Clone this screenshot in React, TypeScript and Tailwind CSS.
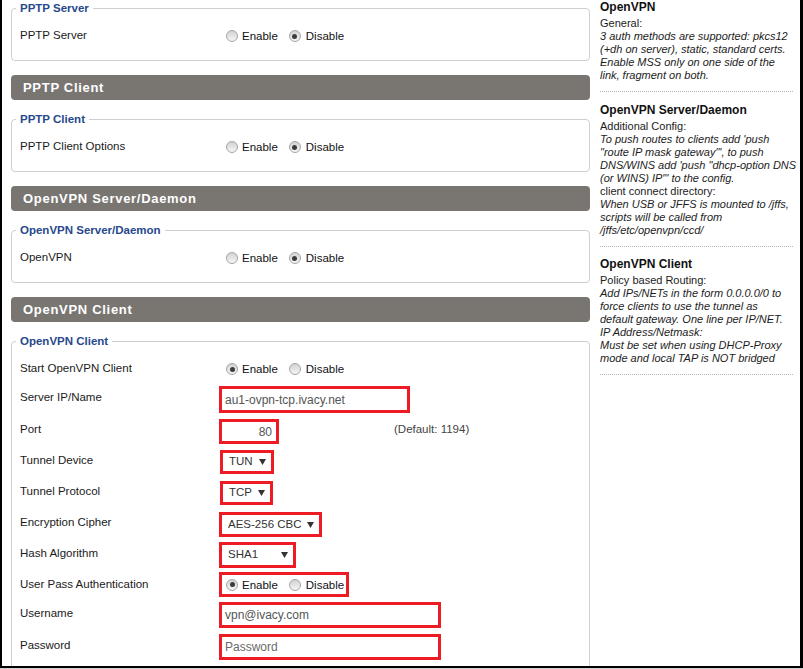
import React from 'react';

// small radio look-alike (Windows style)
function Radio({ checked }: { checked?: boolean }) {
  return (
    <span className="inline-flex h-[12px] w-[12px] items-center justify-center rounded-full border border-[#a5a5a5] bg-linear-to-b from-[#d2d2d2] to-[#f6f6f6]">
      {checked && <span className="h-[5px] w-[5px] rounded-full bg-[#3c3c3c]" />}
    </span>
  );
}

function EnableDisable({ enabled }: { enabled: boolean }) {
  return (
    <div className="flex items-center text-[11.5px] text-[#111]">
      <Radio checked={enabled} />
      <span className="ml-[4px] pt-[2px]">Enable</span>
      <span className="ml-[11px] flex items-center">
        <Radio checked={!enabled} />
      </span>
      <span className="ml-[5px] pt-[2px]">Disable</span>
    </div>
  );
}

function SectionBar({ title }: { title: string }) {
  return (
    <div className="mt-[14px] flex h-[25px] items-center rounded-[4px] bg-[#797672] pl-[12px] text-[13px] font-bold tracking-[0.7px] text-white">
      {title}
    </div>
  );
}

function Fieldset({ legend, className, children }: { legend: string; className?: string; children: React.ReactNode }) {
  return (
    <fieldset className={`rounded-[4px] border border-[#cfcfcf] pl-[4px] ${className ?? ''}`}>
      <legend className="px-[4px] text-[11.5px] font-bold leading-[14px] text-[#27498c]">{legend}</legend>
      <div className="pl-[4px]">{children}</div>
    </fieldset>
  );
}

function Label({ children, raised }: { children: React.ReactNode; raised?: boolean }) {
  return (
    <div className={`w-[199px] shrink-0 text-[11.5px] text-[#1a1a1a] ${raised ? 'pb-[3px]' : ''}`}>{children}</div>
  );
}

function SelectBox({ value, width, offset }: { value: string; width: string; offset?: string }) {
  return (
    <div className={`box-border flex h-full items-center justify-between border-[3px] border-[#ed1c24] pl-[6px] pr-[5px] text-[11.5px] text-[#333] ${width} ${offset ?? ''}`}>
      <span>{value}</span>
      <svg width="7" height="6" viewBox="0 0 7 6" className="shrink-0">
        <path d="M0 0 L7 0 L3.5 6 Z" fill="#333" />
      </svg>
    </div>
  );
}

function TextBox({ value, placeholder, width, right }: { value?: string; placeholder?: string; width: string; right?: boolean }) {
  return (
    <div
      className={`box-border flex h-full items-center border-[3px] border-[#ed1c24] text-[12px] ${
        right ? 'justify-end pr-[4px]' : 'pl-[3px]'
      } ${value ? 'text-[#555]' : 'text-[#6a6a6a]'} ${width}`}
    >
      {value ?? placeholder}
    </div>
  );
}

const help = [
  {
    title: 'OpenVPN',
    mt: 'mt-0',
    lines: [
      { t: 'General:', i: false },
      { t: '3 auth methods are supported: pkcs12', i: true },
      { t: '(+dh on server), static, standard certs.', i: true },
      { t: 'Enable MSS only on one side of the', i: true },
      { t: 'link, fragment on both.', i: true },
    ],
  },
  {
    title: 'OpenVPN Server/Daemon',
    mt: 'mt-[11px]',
    lines: [
      { t: 'Additional Config:', i: false },
      { t: "To push routes to clients add 'push", i: true },
      { t: '"route IP mask gateway"\', to push', i: true },
      { t: 'DNS/WINS add \'push "dhcp-option DNS', i: true },
      { t: '(or WINS) IP"\' to the config.', i: true },
      { t: 'client connect directory:', i: false },
      { t: 'When USB or JFFS is mounted to /jffs,', i: true },
      { t: 'scripts will be called from', i: true },
      { t: '/jffs/etc/openvpn/ccd/', i: true },
    ],
  },
  {
    title: 'OpenVPN Client',
    mt: 'mt-[10px]',
    lines: [
      { t: 'Policy based Routing:', i: false },
      { t: 'Add IPs/NETs in the form 0.0.0.0/0 to', i: true },
      { t: 'force clients to use the tunnel as', i: true },
      { t: 'default gateway. One line per IP/NET.', i: true },
      { t: 'IP Address/Netmask:', i: true },
      { t: 'Must be set when using DHCP-Proxy', i: true },
      { t: 'mode and local TAP is NOT bridged', i: true },
    ],
  },
];

export default function App() {
  return (
    <div className="h-[669px] w-[803px] overflow-hidden bg-white font-['Liberation_Sans',Arial,sans-serif]">
      <div className="flex h-[668px] border-b-2 border-l-2 border-r-[3px] border-black">
        {/* main settings column */}
        <div className="w-[588px] shrink-0 overflow-hidden pl-[9px] pt-[1px]">
          <Fieldset legend="PPTP Server" className="pb-[10px]">
            <div className="mt-[7px] flex h-[28px] items-center">
              <Label>PPTP Server</Label>
              <div className="pl-[7px]">
                <EnableDisable enabled={false} />
              </div>
            </div>
          </Fieldset>

          <SectionBar title="PPTP Client" />
          <Fieldset legend="PPTP Client" className="mt-[12px] pb-[10px]">
            <div className="mt-[7px] flex h-[28px] items-center">
              <Label>PPTP Client Options</Label>
              <div className="pl-[7px]">
                <EnableDisable enabled={false} />
              </div>
            </div>
          </Fieldset>

          <SectionBar title="OpenVPN Server/Daemon" />
          <Fieldset legend="OpenVPN Server/Daemon" className="mt-[12px] pb-[10px]">
            <div className="mt-[7px] flex h-[28px] items-center">
              <Label>OpenVPN</Label>
              <div className="pl-[7px]">
                <EnableDisable enabled={false} />
              </div>
            </div>
          </Fieldset>

          <SectionBar title="OpenVPN Client" />
          <Fieldset legend="OpenVPN Client" className="mt-[12px] pb-[20px]">
            <div className="mt-[6px] flex h-[30px] items-center">
              <Label>Start OpenVPN Client</Label>
              <div className="pl-[7px]">
                <EnableDisable enabled />
              </div>
            </div>

            <div className="mt-[2px] flex h-[27px] items-center">
              <Label raised>Server IP/Name</Label>
              <TextBox value="au1-ovpn-tcp.ivacy.net" width="w-[191px]" />
            </div>

            <div className="mt-[6px] flex h-[25px] items-center">
              <Label raised>Port</Label>
              <TextBox value="80" width="w-[60px]" right />
              <span className="ml-[115px] pb-[3px] text-[11.5px] text-[#444]">(Default: 1194)</span>
            </div>

            <div className="mt-[6px] flex h-[24px] items-center">
              <Label raised>Tunnel Device</Label>
              <SelectBox value="TUN" width="w-[54px]" offset="ml-[1px]" />
            </div>

            <div className="mt-[7px] flex h-[24px] items-center">
              <Label raised>Tunnel Protocol</Label>
              <SelectBox value="TCP" width="w-[53px]" offset="ml-[1px]" />
            </div>

            <div className="mt-[7px] flex h-[25px] items-center">
              <Label raised>Encryption Cipher</Label>
              <SelectBox value="AES-256 CBC" width="w-[103px]" />
            </div>

            <div className="mt-[5px] flex h-[26px] items-center">
              <Label raised>Hash Algorithm</Label>
              <SelectBox value="SHA1" width="w-[77px]" />
            </div>

            <div className="mt-[4px] flex h-[25px] items-center">
              <Label>User Pass Authentication</Label>
              <div className="flex h-full w-[130px] items-center border-[3px] border-[#ed1c24] pl-[4px]">
                <EnableDisable enabled />
              </div>
            </div>

            <div className="mt-[5px] flex h-[26px] items-center">
              <Label raised>Username</Label>
              <TextBox value="vpn@ivacy.com" width="w-[222px]" />
            </div>

            <div className="mt-[6px] flex h-[26px] items-center">
              <Label raised>Password</Label>
              <TextBox placeholder="Password" width="w-[222px]" />
            </div>
          </Fieldset>
        </div>

        {/* help sidebar */}
        <div className="flex-1 pl-[10px] text-[11px] text-[#1c1c1c]">
          {help.map((h) => (
            <div key={h.title} className={h.mt}>
              <div className="text-[12px] font-bold leading-[14px] text-[#111]">{h.title}</div>
              <div className="mt-[3px] leading-[13px]">
                {h.lines.map((l, idx) => (
                  <div key={idx} className={`whitespace-nowrap ${l.i ? 'italic' : ''}`}>
                    {l.t}
                  </div>
                ))}
              </div>
              <div className="mt-[9px] w-[193px] border-t border-dotted border-[#b5b5b5]" />
            </div>
          ))}
        </div>
      </div>
      <div className="h-[1px] bg-[#cfcfcf]" />
    </div>
  );
}
